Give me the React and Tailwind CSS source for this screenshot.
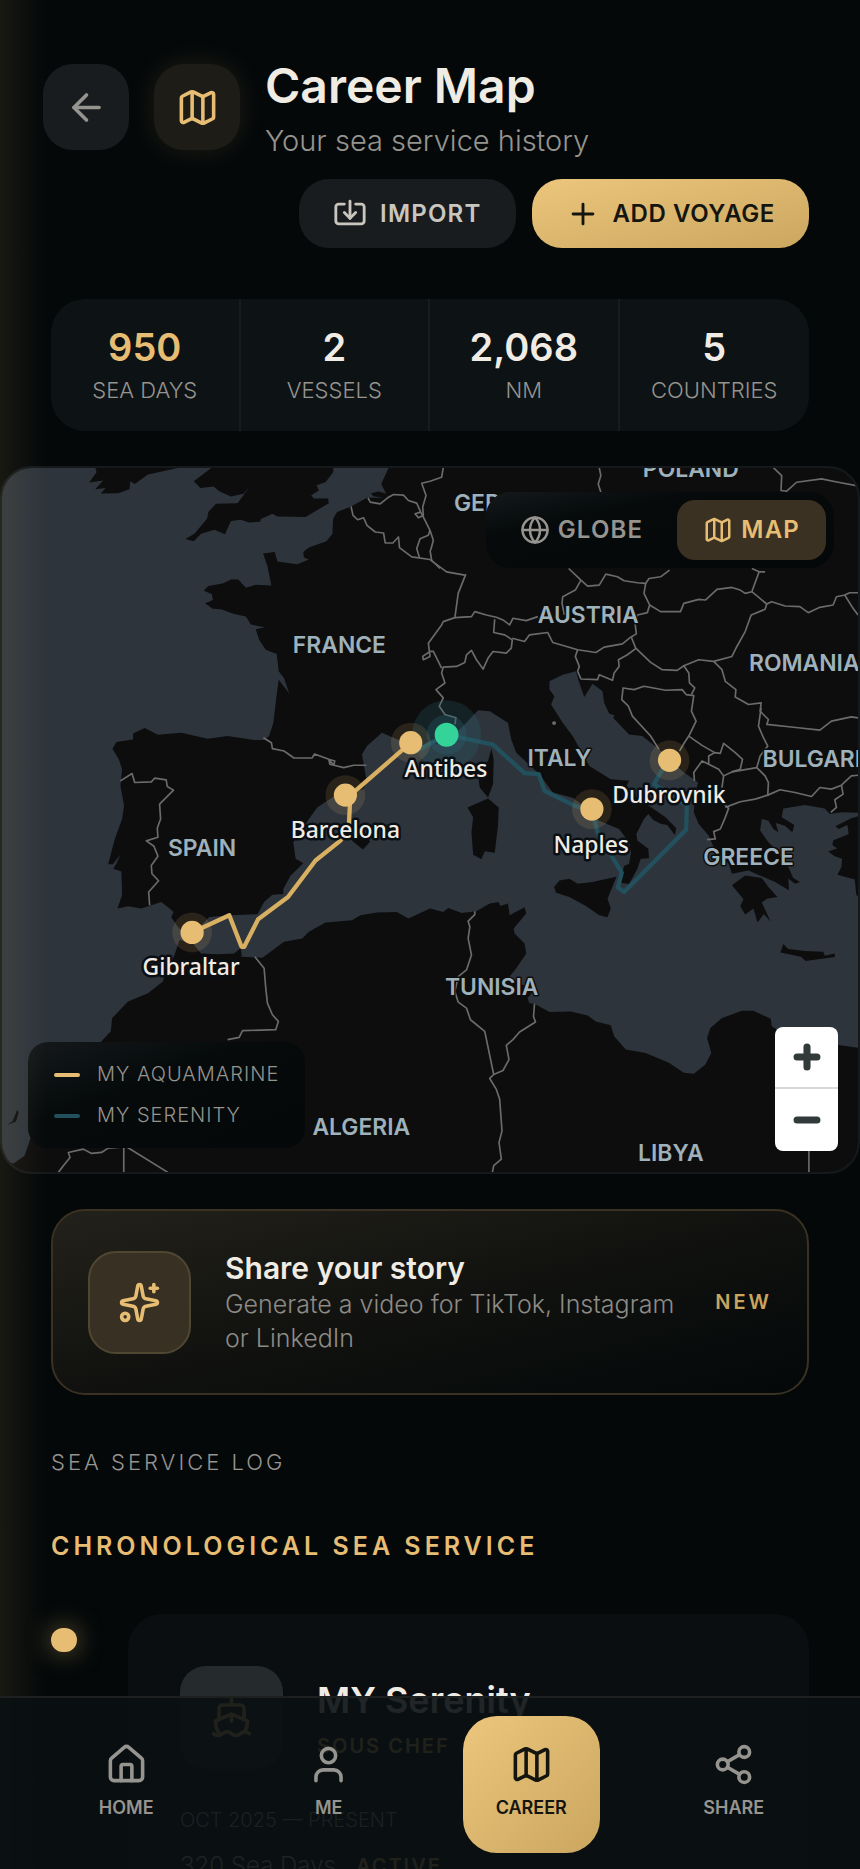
import React from "react";
import {
  ArrowLeft,
  Globe,
  House,
  Import,
  Map,
  Minus,
  Plus,
  Share2,
  Ship,
  Sparkles,
  User,
} from "lucide-react";

const stats = [
  { value: "950", label: "SEA DAYS", color: "text-[#e6bd73]" },
  { value: "2", label: "VESSELS", color: "text-[#f0ece4]" },
  { value: "2,068", label: "NM", color: "text-[#f0ece4]" },
  { value: "5", label: "COUNTRIES", color: "text-[#f0ece4]" },
];

const countries = [
  { name: "FRANCE", x: 339, y: 193 },
  { name: "GERMANY", x: 513, y: 51 },
  { name: "POLAND", x: 692, y: 16 },
  { name: "AUSTRIA", x: 589, y: 163 },
  { name: "ROMANIA", x: 806, y: 211 },
  { name: "BULGARIA", x: 822, y: 308 },
  { name: "ITALY", x: 560, y: 307 },
  { name: "SPAIN", x: 201, y: 397 },
  { name: "GREECE", x: 750, y: 406 },
  { name: "TUNISIA", x: 492, y: 537 },
  { name: "ALGERIA", x: 361, y: 677 },
  { name: "LIBYA", x: 672, y: 704 },
];

const ports = [
  { name: "Antibes", x: 446, y: 318 },
  { name: "Barcelona", x: 345, y: 379 },
  { name: "Dubrovnik", x: 670, y: 344 },
  { name: "Naples", x: 592, y: 394 },
  { name: "Gibraltar", x: 190, y: 517 },
];

const markers = [
  [1232, 850],
  [1035, 1008],
  [573, 1422],
  [2012, 903],
  [1778, 1050],
];

function Header() {
  return (
    <header className="pt-[54px] pl-[43px] pr-[51px]">
      <div className="flex items-center gap-[25px]">
        <button
          aria-label="Back"
          className="flex size-[86px] shrink-0 items-center justify-center rounded-[30px] bg-[#181c1e] text-[#96948f]"
        >
          <ArrowLeft size={43} />
        </button>
        <div className="flex size-[86px] shrink-0 items-center justify-center rounded-[30px] bg-[#1d1c17] text-[#e6bd73] shadow-[0_0_28px_rgba(230,189,115,0.12)]">
          <Map size={43} />
        </div>
        <div>
          <h1 className="text-[48px] leading-[64px] font-semibold text-[#f0ece4]">
            Career Map
          </h1>
          <p className="pt-1 text-[29px] leading-[38px] font-light text-[#96948f]">
            Your sea service history
          </p>
        </div>
      </div>
      <div className="mt-[19px] flex justify-end gap-4">
        <button className="flex h-[69px] items-center gap-[13px] rounded-[30px] bg-[#181c1e] px-[34px] text-[24px] font-semibold tracking-wider text-[#c9c6c0]">
          <Import size={34} />
          IMPORT
        </button>
        <button className="flex h-[69px] items-center gap-[13px] rounded-[30px] bg-linear-to-br from-[#ecc67c] to-[#cba65f] px-[34px] text-[24px] font-semibold tracking-wide text-[#15150f]">
          <Plus size={34} />
          ADD VOYAGE
        </button>
      </div>
    </header>
  );
}

function Stats() {
  return (
    <section className="mx-[51px] mt-[51px] grid grid-cols-4 divide-x-2 divide-[#181c1e] rounded-[34px] bg-[#0d1215]">
      {stats.map((s) => (
        <div key={s.label} className="pt-[25px] pb-[25px] text-center">
          <p className={`text-[38px] leading-[46px] font-semibold ${s.color}`}>
            {s.value}
          </p>
          <p className="pt-1 text-[22px] leading-[32px] font-light text-[#96948f]">
            {s.label}
          </p>
        </div>
      ))}
    </section>
  );
}

function Land() {
  return (
    <g fill="#0d0d0d">
      {/* mainland europe */}
      <path d="M1175 0 L1143 70 L1158 100 L1135 93 L1112 98 L1120 107 L1150 112 L1100 112 L1052 138 L1010 155 L998 175 L996 220 L978 243 L925 262 L908 275 L910 292 L925 298 L890 312 L830 304 L822 275 L787 280 L800 318 L812 376 L765 374 L735 383 L712 358 L690 358 L665 370 L622 378 L608 392 L632 402 L636 420 L612 430 L635 446 L660 448 L700 462 L735 470 L750 494 L792 502 L765 508 L775 540 L795 570 L828 583 L834 635 L850 655 L866 702 L834 660 L826 720 L818 790 L805 830 L790 842 L760 842 L680 830 L620 838 L540 820 L470 826 L430 806 L395 822 L395 840 L345 848 L333 868 L352 900 L362 930 L357 980 L368 1040 L362 1080 L340 1140 L320 1216 L334 1216 L357 1188 L345 1214 L335 1230 L360 1238 L362 1310 L348 1350 L380 1343 L420 1350 L480 1330 L505 1350 L517 1360 L510 1376 L530 1405 L555 1430 L600 1400 L625 1375 L690 1370 L770 1367 L790 1330 L815 1308 L848 1306 L848 1290 L870 1250 L908 1213 L885 1200 L878 1150 L900 1120 L925 1080 L950 1045 L1000 1012 L1090 990 L1098 960 L1085 885 L1100 860 L1145 820 L1180 835 L1240 860 L1340 850 L1390 800 L1435 752 L1470 755 L1525 790 L1535 840 L1550 880 L1620 945 L1660 1000 L1720 1016 L1760 1045 L1800 1085 L1860 1110 L1890 1150 L1896 1180 L1890 1215 L1875 1222 L1864 1272 L1890 1276 L1915 1230 L1925 1200 L1950 1198 L1948 1170 L1915 1145 L1912 1125 L1935 1080 L1948 1065 L1962 1082 L1985 1094 L2005 1098 L2028 1128 L2032 1108 L2000 1075 L1920 1020 L1880 985 L1890 965 L1835 960 L1770 920 L1720 830 L1690 790 L1655 735 L1665 710 L1650 690 L1650 665 L1690 645 L1730 635 L1737 660 L1755 712 L1780 672 L1810 695 L1815 730 L1830 762 L1847 768 L1842 775 L1890 825 L1930 830 L1980 870 L2050 935 L2098 970 L2090 1000 L2085 1060 L2100 1095 L2130 1130 L2145 1165 L2190 1215 L2200 1245 L2250 1235 L2330 1270 L2372 1295 L2370 1260 L2345 1240 L2390 1275 L2405 1270 L2385 1258 L2370 1225 L2330 1170 L2310 1150 L2285 1115 L2290 1080 L2310 1085 L2325 1110 L2340 1120 L2332 1092 L2360 1100 L2382 1120 L2388 1098 L2350 1075 L2355 1048 L2420 1038 L2480 1048 L2495 1065 L2530 1060 L2600 1062 L2600 0Z" />
      {/* ireland, britain */}
      <path d="M275 0 L285 35 L263 66 L305 60 L281 86 L312 82 L298 99 L350 98 L384 86 L387 62 L400 70 L440 42 L530 22 L540 0Z" />
      <path d="M660 0 L578 62 L598 82 L638 78 L655 92 L690 108 L728 100 L748 76 L710 128 L645 130 L622 155 L618 175 L580 220 L553 236 L578 243 L600 220 L640 208 L672 222 L690 182 L720 178 L745 186 L778 184 L780 176 L815 160 L830 168 L915 170 L985 128 L983 114 L940 114 L932 104 L955 90 L948 74 L975 65 L998 35 L1000 0Z" />
      {/* corsica, sardinia, balearics */}
      <path d="M1475 868 L1482 900 L1480 975 L1465 1015 L1440 985 L1432 930 L1465 905Z" />
      <path d="M1403 1045 L1465 1018 L1497 1045 L1495 1100 L1485 1182 L1455 1177 L1445 1201 L1420 1188 L1415 1120 L1420 1075Z" />
      <path d="M1050 1140 L1085 1125 L1110 1148 L1088 1172 L1068 1156Z" />
      {/* sicily, peloponnese, crete */}
      <path d="M1664 1285 L1680 1265 L1710 1260 L1735 1275 L1780 1270 L1852 1254 L1825 1320 L1835 1350 L1825 1376 L1800 1370 L1760 1342 L1710 1315 L1670 1302Z" />
      <path d="M2200 1280 L2240 1250 L2290 1258 L2310 1285 L2337 1315 L2305 1320 L2290 1332 L2317 1390 L2296 1366 L2277 1392 L2265 1350 L2240 1368 L2225 1342 L2235 1322Z" />
      <path d="M2346 1482 L2355 1457 L2370 1472 L2420 1478 L2475 1480 L2480 1492 L2510 1485 L2510 1496 L2422 1508 L2408 1495Z" />
      {/* turkey */}
      <path d="M2600 1066 L2560 1078 L2512 1102 L2522 1110 L2548 1098 L2552 1125 L2505 1145 L2503 1158 L2532 1180 L2528 1165 L2490 1178 L2510 1192 L2532 1200 L2530 1225 L2518 1248 L2570 1262 L2575 1310 L2600 1320Z" />
      {/* africa */}
      <path d="M0 2110 L35 2118 L68 2095 L90 2030 L85 1980 L170 1860 L300 1750 L328 1720 L332 1680 L380 1630 L440 1605 L485 1570 L490 1550 L520 1490 L535 1445 L575 1455 L600 1485 L650 1488 L700 1485 L720 1468 L722 1495 L785 1498 L850 1450 L905 1440 L925 1420 L975 1392 L1055 1385 L1080 1370 L1130 1362 L1190 1360 L1225 1380 L1290 1350 L1330 1360 L1345 1348 L1385 1363 L1430 1358 L1470 1335 L1497 1330 L1502 1342 L1525 1335 L1530 1370 L1575 1346 L1580 1365 L1542 1410 L1545 1425 L1575 1455 L1580 1485 L1550 1530 L1530 1555 L1600 1600 L1584 1620 L1590 1635 L1605 1637 L1650 1662 L1715 1660 L1765 1672 L1790 1690 L1835 1702 L1845 1735 L1880 1775 L1940 1785 L2010 1815 L2055 1845 L2085 1848 L2120 1820 L2138 1785 L2125 1740 L2135 1710 L2170 1680 L2230 1658 L2265 1658 L2317 1682 L2320 1705 L2390 1750 L2510 1760 L2600 1772 L2600 2200 L0 2200Z" />
      <path d="M16 2002 L32 1990 L46 1956 L50 1966 L42 1992Z" />
    </g>
  );
}

function Borders() {
  return (
    <g fill="none" stroke="#6b6b6b" strokeWidth="5" strokeLinejoin="round">
      {/* iberia and france */}
      <path d="M357 965 L392 943 L400 970 L450 968 L460 957 L495 962 L498 982 L517 993 L475 1035 L478 1080 L468 1108 L470 1135 L435 1146 L458 1162 L470 1192 L450 1220 L452 1245 L472 1266 L442 1300 L445 1340" />
      <path d="M788 835 L812 850 L815 868 L850 875 L880 896 L935 896 L942 884 L985 900 L1000 918 L1030 925 L1060 918 L1098 918 M985 900 L1003 905 L1000 918 L988 915Z" />
      <path d="M1052 138 L1058 165 L1072 178 L1090 172 L1100 195 L1125 215 L1150 218 L1155 248 L1178 248 L1195 230 L1198 262 L1235 290 L1290 298 L1340 335 L1395 345" />
      <path d="M1103 112 L1110 125 L1140 130 L1165 110 L1180 102 L1210 104 L1225 120 L1250 128 L1262 155 L1275 180 L1290 210 L1285 225 L1260 235 L1250 265 L1258 292 M1290 210 L1300 240 L1292 270" />
      <path d="M1262 155 L1245 160 L1255 172 L1270 165 L1268 140 L1278 105 L1265 68 L1290 62 L1325 50 L1330 21" />
      <path d="M1325 625 L1300 575 L1290 575 L1268 590 L1270 600 L1290 590 L1285 550 L1325 495 L1330 485 L1365 473 L1375 400 L1398 342" />
      {/* alps */}
      <path d="M1365 473 L1415 470 L1425 455 L1460 465 L1490 472 L1510 480 L1530 495 L1540 475 L1580 482 L1615 470" />
      <path d="M1485 478 L1482 518 L1515 525 L1538 540 L1535 565 L1520 580 L1480 575 L1465 595 L1450 628 L1430 600 L1415 572 L1400 585 L1395 608 L1370 620 L1330 622 L1325 640 L1335 670 L1308 690 L1330 715 L1318 740 L1335 765 L1368 775 L1365 795" />
      <path d="M1538 535 L1575 545 L1590 525 L1645 518 L1660 548 L1735 570 L1790 578 L1815 562 L1870 552 L1895 532 L1912 522 L1908 490 L1915 465 L1945 458 L1952 435 L1935 400 L1940 370" />
      <path d="M1708 325 L1745 360 L1765 378 L1800 375 L1820 342 L1855 350 L1875 362 L1915 368 L1940 370 L1950 355 L1985 350 L2012 330 M1745 360 L1728 390 L1690 410 L1688 430 L1695 465" />
      <path d="M1800 21 L1805 45 L1797 70 L1805 95" />
      <path d="M1952 435 L1985 455 L2045 455 L2055 430 L2100 418 L2120 420 L2155 388 L2200 382 L2225 390 L2240 400 L2260 395 L2282 335 L2260 325 M2282 335 L2300 335" />
      <path d="M2260 395 L2305 432 L2320 425 L2360 438 L2405 440 L2430 458 L2465 442 L2505 435 L2515 410 L2540 405 L2565 445 L2580 465 M2540 405 L2555 398 L2580 398" />
      <path d="M2305 432 L2300 448 L2258 465 L2240 515 L2215 560 L2200 590 L2145 605 L2100 600 L2055 618 L2035 632 L1990 630 L1955 608 L1910 565 L1897 532" />
      {/* balkans */}
      <path d="M1735 570 L1728 590 L1740 620 L1735 635 L1745 658 L1795 660 L1800 645 L1840 662 L1845 640 L1860 620 L1858 600 L1885 585 L1912 565" />
      <path d="M1980 870 L1955 830 L1900 770 L1888 740 L1868 720 L1872 685 L1905 690 L1935 680 L2000 692 L2050 690 L2062 705 L2085 708 L2078 755 L2092 785 L2080 810 L2070 830 L2058 848 L2042 875" />
      <path d="M2055 618 L2070 640 L2072 670 L2088 685 L2078 705" />
      <path d="M2145 605 L2170 630 L2180 665 L2212 690 L2210 712 L2250 735 L2288 730 L2285 755 L2310 780 L2305 795 L2400 805 L2465 812 L2500 785 L2560 772 L2580 775" />
      <path d="M2288 745 L2280 800 L2295 835 L2308 860 L2285 890 L2275 925 L2300 950 L2310 970 L2308 1008 L2270 1020 L2225 1028 L2180 1045" />
      <path d="M2070 830 L2110 858 L2148 880 L2165 882 L2175 852 L2210 880 L2232 900 L2225 930 L2200 938 L2175 950 L2160 930 L2130 915 L2130 890 L2148 880 M2130 915 L2110 905 L2085 940 L2087 965" />
      <path d="M2175 950 L2170 985 L2160 1020 L2190 1048 L2180 1075 L2165 1110 L2145 1118 L2150 1140 L2125 1142 M2200 938 L2275 925" />
      <path d="M2308 1008 L2345 992 L2390 1000 L2440 1012 L2465 985 L2500 990 L2530 978 L2535 1005 L2510 1022 L2515 1045 L2498 1060 M2530 978 L2560 950 L2580 948" />
      {/* poland, ukraine */}
      <path d="M2325 21 L2350 45 L2348 90 L2365 92 L2395 65 L2470 55 L2520 65 L2575 75" />
      <path d="M1290 270 L1295 300 L1320 325" />
      {/* maghreb */}
      <path d="M762 1495 L790 1530 L795 1590 L800 1635 L815 1670 L833 1690 L825 1715 L725 1718 L715 1738 L680 1745" />
      <path d="M170 2145 L185 2125 L205 2100 L200 2085 L245 2075 L270 2088 L300 2085 L320 2072 L367 2068 L367 2145 M375 2068 L500 2145" />
      <path d="M1425 1358 L1425 1368 L1405 1388 L1410 1405 L1405 1440 L1415 1490 L1400 1535 L1375 1555 L1365 1600 L1375 1632 L1400 1650 L1412 1685 L1455 1720 L1482 1850 L1470 1862 L1490 1895 L1500 1925 L1507 2020 L1498 2055 L1505 2105 L1482 2125 L1478 2145" />
      <path d="M1605 1637 L1602 1675 L1608 1692 L1560 1722 L1540 1745 L1520 1762 L1528 1805 L1510 1838 L1482 1850" />
      <path d="M2432 2000 L2432 2145" />
    </g>
  );
}

function VoyageMap() {
  return (
    <svg
      viewBox="0 21 2580 2124"
      preserveAspectRatio="xMidYMid slice"
      className="block h-[704px] w-full bg-[#2d343c]"
      role="img"
      aria-label="Map of voyages"
    >
      <Land />
      <Borders />
      <circle cx="1664" cy="791" r="6" fill="#6b6b6b" />

      <g fill="none" strokeLinejoin="round">
        <path
          d="M1240 880 L1340 826 L1480 856 L1575 942 L1618 945 L1635 995 L1730 1042 L1778 1052 L1795 1120 L1868 1242 L1856 1286 L1875 1300 L2062 1112 L2064 1040 L1965 975 L1985 940 L2012 903"
          stroke="#22505d"
          strokeWidth="13"
        />
        <path
          d="M1232 850 L1050 1008 L1045 1110 L1020 1145 L945 1205 L862 1315 L772 1382 L730 1465 L722 1465 L685 1370 L573 1422"
          stroke="#d9b062"
          strokeWidth="13"
        />
      </g>

      <circle cx="1340" cy="826" r="104" fill="#2a6570" opacity="0.25" />
      <circle cx="1340" cy="826" r="60" fill="#2a6570" opacity="0.3" />
      {markers.map(([x, y]) => (
        <g key={x} fill="#e6bd73">
          <circle cx={x} cy={y} r="60" opacity="0.13" />
          <circle cx={x} cy={y} r="35" />
        </g>
      ))}
      <circle cx="1340" cy="826" r="36" fill="#34d399" />

      <g
        transform="scale(3)"
        textAnchor="middle"
        strokeLinejoin="round"
        paintOrder="stroke"
      >
        <g
          className="font-['Inter',sans-serif] text-[23px] font-semibold"
          fill="#9fb1ba"
          stroke="#0d0d0d"
          strokeWidth="3"
        >
          {countries.map((c) => (
            <text key={c.name} x={c.x} y={c.y}>
              {c.name}
            </text>
          ))}
        </g>
        <g
          className="font-['Noto_Sans',sans-serif] text-[23px] font-medium"
          fill="#f0ece4"
          stroke="#0a0f14"
          strokeWidth="5"
        >
          {ports.map((p) => (
            <text key={p.name} x={p.x} y={p.y}>
              {p.name}
            </text>
          ))}
        </g>
      </g>
    </svg>
  );
}

function MapPanel() {
  return (
    <section className="relative mt-[35px] overflow-hidden rounded-[32px] border-2 border-[#15191b]">
      <VoyageMap />

      <div className="absolute top-6 right-6 flex gap-2 rounded-[24px] bg-linear-to-br from-[#15191b] via-[#060a0b] via-30% to-[#040809] p-2 text-[24px] font-semibold tracking-wider">
        <button className="flex h-[60px] items-center gap-2 px-[26px] text-[#96948f]">
          <Globe size={30} />
          GLOBE
        </button>
        <button className="flex h-[60px] items-center gap-2 rounded-[18px] bg-[#3a3122] px-[26px] text-[#e6bd73]">
          <Map size={30} />
          MAP
        </button>
      </div>

      <ul className="absolute bottom-6 left-[26px] flex flex-col gap-2 rounded-[20px] bg-linear-to-br from-[#15191b] via-[#060a0b] via-40% to-[#040809] px-[26px] py-4 text-[20px] leading-[33px] font-light tracking-wider text-[#96948f]">
        <li className="flex items-center gap-[17px]">
          <span className="h-1 w-[26px] rounded-full bg-[#e6bd73]"></span>
          MY AQUAMARINE
        </li>
        <li className="flex items-center gap-[17px]">
          <span className="h-1 w-[26px] rounded-full bg-[#22505d]"></span>
          MY SERENITY
        </li>
      </ul>

      <div className="absolute right-5 bottom-[21px] flex w-[63px] flex-col divide-y-2 divide-[#d8d8d4] overflow-hidden rounded-[8px] bg-white text-[#333a3a]">
        <button
          aria-label="Zoom in"
          className="flex h-[62px] items-center justify-center"
        >
          <Plus size={34} strokeWidth={5} />
        </button>
        <button
          aria-label="Zoom out"
          className="flex h-[62px] items-center justify-center"
        >
          <Minus size={34} strokeWidth={5} />
        </button>
      </div>
    </section>
  );
}

function ShareCard() {
  return (
    <a
      href="#"
      className="mx-[51px] mt-[35px] flex items-center gap-[34px] rounded-[34px] border-2 border-[#3a3122] bg-linear-to-br from-[#23211b] via-[#11120f] to-[#040809] px-[35px] py-[38px]"
    >
      <div className="flex size-[103px] shrink-0 items-center justify-center rounded-[28px] border-2 border-[#504732] bg-[#383023] text-[#e6bd73]">
        <Sparkles size={43} />
      </div>
      <div className="flex-1">
        <h2 className="text-[30px] leading-[38px] font-semibold text-[#f0ece4]">
          Share your story
        </h2>
        <p className="text-[25px] leading-[34px] font-light text-[#8d8b86]">
          Generate a video for TikTok, Instagram or LinkedIn
        </p>
      </div>
      <span className="text-[20px] font-semibold tracking-[3px] text-[#c9a55e]">
        NEW
      </span>
    </a>
  );
}

function ServiceLog() {
  return (
    <section className="mt-[51px] px-[51px]">
      <h2 className="text-[22px] leading-8 font-light tracking-[3px] text-[#96948f]">
        SEA SERVICE LOG
      </h2>
      <h3 className="mt-[52px] text-[25px] leading-8 font-semibold tracking-[4px] text-[#e6bd73]">
        CHRONOLOGICAL SEA SERVICE
      </h3>
      <div className="mt-[52px] flex gap-[51px]">
        <span className="mt-[14px] h-6 w-[26px] shrink-0 rounded-full bg-[#e6bd73] shadow-[0_0_26px_rgba(230,189,115,0.5)]"></span>
        <article className="flex-1 rounded-[34px] bg-[#0a0e11] p-[52px]">
          <div className="flex gap-[34px]">
            <div className="flex size-[103px] shrink-0 items-center justify-center rounded-[26px] bg-[#252a2c] text-[#e6bd73]">
              <Ship size={43} />
            </div>
            <div className="pt-2">
              <h4 className="text-[36px] leading-[52px] font-semibold text-[#f0ece4]">
                MY Serenity
              </h4>
              <p className="pt-1 text-[20px] leading-8 font-semibold tracking-[2px] text-[#e6bd73]">
                SOUS CHEF
              </p>
            </div>
          </div>
          <p className="pt-[35px] text-[20px] leading-8 font-light text-[#b8b1a2]">
            OCT 2025 — PRESENT
          </p>
          <p className="flex items-center gap-5 pt-[14px] text-[24px] leading-8 font-light text-[#c9c6c0]">
            320 Sea Days
            <span className="text-[20px] font-semibold tracking-[2px] text-[#e6bd73]">
              ACTIVE
            </span>
          </p>
        </article>
      </div>
    </section>
  );
}

function NavBar() {
  const item =
    "flex size-[137px] flex-col items-center justify-center gap-[10px] rounded-[34px] pb-[6px] text-[18px] leading-6 font-semibold";
  return (
    <nav className="absolute inset-x-0 bottom-0 grid grid-cols-4 justify-items-center border-t-2 border-[#1e201f] bg-[#0a0f12]/90 px-[25px] pt-[18px] pb-4 text-[#96948f]">
      <a href="#" className={item}>
        <House size={43} />
        HOME
      </a>
      <a href="#" className={item}>
        <User size={43} />
        ME
      </a>
      <a
        href="#"
        className={`${item} bg-linear-to-br from-[#ecc67c] to-[#cba65f] text-[#15150f]`}
      >
        <Map size={43} />
        CAREER
      </a>
      <a href="#" className={item}>
        <Share2 size={43} />
        SHARE
      </a>
    </nav>
  );
}

export default function App() {
  return (
    <div className="relative h-dvh overflow-hidden bg-[#040809] font-['Inter',sans-serif]">
      <main className="h-full overflow-y-auto [scrollbar-width:none]">
        <Header />
        <Stats />
        <MapPanel />
        <ShareCard />
        <ServiceLog />
      </main>
      {/* warm light along the left edge */}
      <div className="pointer-events-none absolute inset-y-0 left-0 w-[46px] bg-linear-to-r from-[#e6bd73]/9 to-transparent"></div>
      <NavBar />
    </div>
  );
}
